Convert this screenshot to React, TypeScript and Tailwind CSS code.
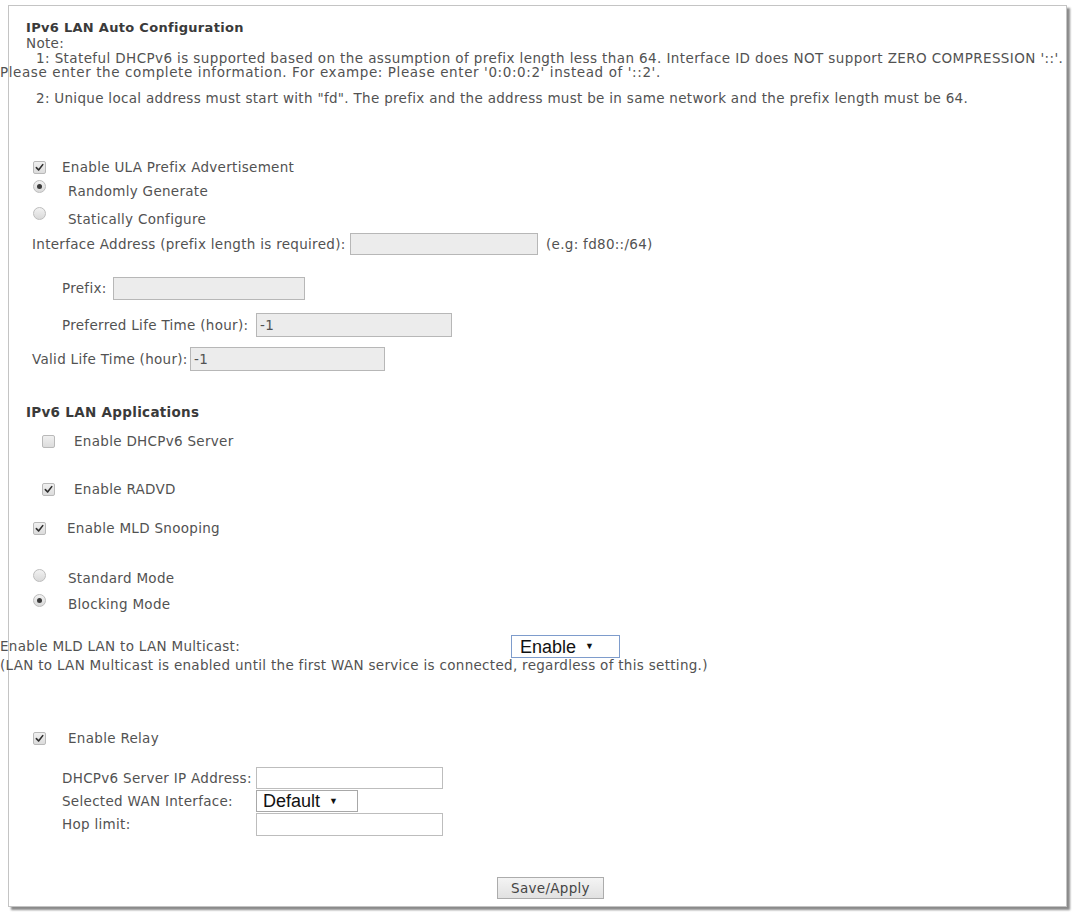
import React from 'react';

const Check = ({ checked }: { checked?: boolean }) => (
  <span className="inline-flex h-[13px] w-[13px] shrink-0 items-center justify-center rounded-[2px] border border-[#b9b9b9] bg-gradient-to-b from-[#f0f0f0] to-[#dcdcdc]">
    {checked && (
      <svg width="9" height="9" viewBox="0 0 10 10">
        <path d="M1.5 5.2 L4 7.8 L8.6 1.8" fill="none" stroke="#2e2e2e" strokeWidth="1.8" strokeLinecap="round" strokeLinejoin="round" />
      </svg>
    )}
  </span>
);

const Radio = ({ checked }: { checked?: boolean }) => (
  <span className="inline-flex h-[13px] w-[13px] shrink-0 items-center justify-center rounded-full border border-[#bdbdbd] bg-gradient-to-b from-[#f2f2f2] to-[#d9d9d9]">
    {checked && <span className="h-[5px] w-[5px] rounded-full bg-[#3a3a3a]" />}
  </span>
);

const FakeSelect = ({ label, className }: { label: string; className: string }) => (
  <div className={`flex items-center bg-white font-['Liberation_Sans',Arial,sans-serif] text-[18px] leading-none tracking-normal text-[#111] ${className}`}>
    <span>{label}</span>
    <span className="ml-[9px] text-[9px]">▼</span>
  </div>
);

const App: React.FC = () => {
  return (
    <div className="min-h-[920px] bg-white pl-[8px] pt-[5px] font-['DejaVu_Sans',sans-serif] text-[13.5px] tracking-[0.3px] text-[#525252]">
      <div className="box-border flex h-[902px] w-[1059px] flex-col border border-[#c4c4c4] pl-[17px] pt-[15px] shadow-[3px_3px_2px_#8a8a8a]">
        {/* Auto configuration */}
        <div className="h-[14px] text-[13px] font-bold leading-[14px] text-[#3a3a3a]">IPv6 LAN Auto Configuration</div>
        <div className="mt-[1px] h-[14px] leading-[14px]">Note:</div>
        <div className="mt-[1px] h-[14px] whitespace-nowrap pl-[10px] leading-[14px] tracking-[0.4px]">
          1: Stateful DHCPv6 is supported based on the assumption of prefix length less than 64. Interface ID does NOT support ZERO COMPRESSION '::'.
        </div>
        <div className="-ml-[26px] h-[14px] whitespace-nowrap leading-[14px] tracking-[0.6px]">
          Please enter the complete information. For exampe: Please enter '0:0:0:2' instead of '::2'.
        </div>
        <div className="mt-[12px] h-[14px] whitespace-nowrap pl-[10px] leading-[14px]">
          2: Unique local address must start with "fd". The prefix and the address must be in same network and the prefix length must be 64.
        </div>

        <div className="mt-[53px] flex h-[18px] items-center pl-[7px]">
          <Check checked />
          <span className="ml-[16px]">Enable ULA Prefix Advertisement</span>
        </div>
        <div className="mt-[4px] flex h-[18px] items-start pl-[7px]">
          <Radio checked />
          <span className="ml-[22px] mt-[4px] leading-[14px]">Randomly Generate</span>
        </div>
        <div className="mt-[9px] flex h-[19px] items-start pl-[7px]">
          <Radio />
          <span className="ml-[22px] mt-[5px] leading-[14px]">Statically Configure</span>
        </div>

        <div className="mt-[7px] flex h-[22px] items-center">
          <span className="ml-[6px] w-[318px] whitespace-nowrap">Interface Address (prefix length is required):</span>
          <div className="h-[22px] w-[188px] border border-[#b7b7b7] bg-[#ececec]" />
          <span className="ml-[8px]">(e.g: fd80::/64)</span>
        </div>
        <div className="mt-[22px] flex h-[23px] items-center">
          <span className="ml-[36px] w-[51px]">Prefix:</span>
          <div className="h-[23px] w-[192px] border border-[#b7b7b7] bg-[#ececec]" />
        </div>
        <div className="mt-[13px] flex h-[24px] items-center">
          <span className="ml-[36px] w-[194px] whitespace-nowrap">Preferred Life Time (hour):</span>
          <div className="flex h-[24px] w-[196px] items-center border border-[#b7b7b7] bg-[#ececec] pl-[3px]">-1</div>
        </div>
        <div className="mt-[10px] flex h-[24px] items-center">
          <span className="ml-[6px] w-[158px] whitespace-nowrap">Valid Life Time (hour):</span>
          <div className="flex h-[24px] w-[195px] items-center border border-[#b7b7b7] bg-[#ececec] pl-[3px]">-1</div>
        </div>

        {/* Applications */}
        <div className="mt-[34px] h-[14px] font-bold leading-[14px] text-[#3a3a3a]">IPv6 LAN Applications</div>
        <div className="mt-[13px] flex h-[18px] items-center pl-[16px]">
          <Check />
          <span className="ml-[19px]">Enable DHCPv6 Server</span>
        </div>
        <div className="mt-[30px] flex h-[18px] items-center pl-[16px]">
          <Check checked />
          <span className="ml-[19px]">Enable RADVD</span>
        </div>
        <div className="mt-[21px] flex h-[18px] items-center pl-[7px]">
          <Check checked />
          <span className="ml-[21px]">Enable MLD Snooping</span>
        </div>
        <div className="mt-[32px] flex h-[18px] items-start pl-[7px]">
          <Radio />
          <span className="ml-[22px] mt-[2px] leading-[14px]">Standard Mode</span>
        </div>
        <div className="mt-[7px] flex h-[18px] items-start pl-[7px]">
          <Radio checked />
          <span className="ml-[22px] mt-[3px] leading-[14px]">Blocking Mode</span>
        </div>

        <div className="-ml-[26px] mt-[23px] flex h-[23px] items-center">
          <span className="w-[511px] whitespace-nowrap">Enable MLD LAN to LAN Multicast:</span>
          <FakeSelect label="Enable" className="h-[23px] w-[109px] border border-[#7e9ccc] pl-[8px]" />
        </div>
        <div className="-ml-[26px] h-[14px] whitespace-nowrap leading-[14px]">
          (LAN to LAN Multicast is enabled until the first WAN service is connected, regardless of this setting.)
        </div>

        <div className="mt-[57px] flex h-[18px] items-center pl-[7px]">
          <Check checked />
          <span className="ml-[22px]">Enable Relay</span>
        </div>
        <div className="mt-[20px] flex h-[22px] items-center">
          <span className="ml-[36px] w-[194px] whitespace-nowrap">DHCPv6 Server IP Address:</span>
          <div className="h-[22px] w-[187px] border border-[#bdbdbd] bg-white" />
        </div>
        <div className="mt-[1px] flex h-[22px] items-center">
          <span className="ml-[36px] w-[194px] whitespace-nowrap">Selected WAN Interface:</span>
          <FakeSelect label="Default" className="h-[22px] w-[102px] border border-[#a8a8a8] pl-[6px]" />
        </div>
        <div className="mt-[1px] flex h-[23px] items-center">
          <span className="ml-[36px] w-[194px]">Hop limit:</span>
          <div className="h-[23px] w-[187px] border border-[#bdbdbd] bg-white" />
        </div>

        <div className="mt-[41px] flex justify-center pl-[9px]">
          <button className="h-[22px] w-[107px] border border-[#acacac] bg-gradient-to-b from-[#f4f4f4] to-[#e1e1e1] text-[13.5px] text-[#454545]">
            Save/Apply
          </button>
        </div>
      </div>
    </div>
  );
};

export default App;
